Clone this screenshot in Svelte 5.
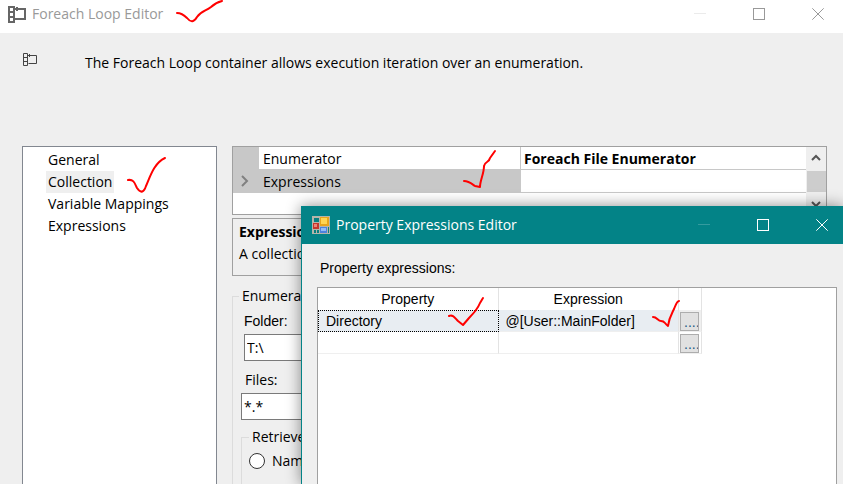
<script lang="ts">
  const pages = ["General", "Collection", "Variable Mappings", "Expressions"];

  let selectedPage = $state("Collection");
  let folder = $state("T:\\");
  let files = $state("*.*");

  const rows = [
    { property: "Directory", expression: "@[User::MainFolder]" },
    { property: "", expression: "" }
  ];

  const marks = [
    "M177 13 C181 13 184 15 187 18 C191 23 194 22 197 17 C201 11 206 11 211 7 C215 3 218 2 222 1",
    "M128 180 C134 179 135 184 137 188 C141 194 144 192 146 186 C150 177 154 163 165 158",
    "M464 181 C469 181 472 184 475 186 L480 187 C480 180 484 174 484 166 C485 161 489 163 490 158 L495 151",
    "M449 316 C453 314 455 318 458 321 L463 325 L469 318 C474 313 478 308 480 303 L483 298",
    "M653 317 C657 317 658 321 661 321 C665 321 664 323 668 326 C669 318 671 315 674 309 C676 304 677 301 679 301"
  ];
</script>

{#snippet captionButtons()}
  <div class="caption-buttons">
    <button aria-label="Minimize" disabled>
      <svg width="12" height="12"><path class="dim" d="M0 5.5H12" /></svg>
    </button>
    <button aria-label="Maximize">
      <svg width="12" height="12"><rect x="0.5" y="0.5" width="11" height="11" /></svg>
    </button>
    <button aria-label="Close">
      <svg width="12" height="12"><path d="M0.3 0.3L11.7 11.7M11.7 0.3L0.3 11.7" /></svg>
    </button>
  </div>
{/snippet}

<div class="window">
  <header class="titlebar">
    <svg class="loop-icon large" width="18" height="17">
      <path d="M1 1H6V16H1ZM1 6H6M1 11H6M6 3H17V13H7M9 1V5" />
    </svg>
    <h1>Foreach Loop Editor</h1>
    {@render captionButtons()}
  </header>

  <div class="intro">
    <svg class="loop-icon" width="14" height="13">
      <path d="M0.5 0.5H4.5V12.5H0.5ZM0.5 4.5H4.5M0.5 8.5H4.5M4.5 2.5H13.5V10.5H5.5M6.5 1V4" />
    </svg>
    <p>The Foreach Loop container allows execution iteration over an enumeration.</p>
  </div>

  <div class="content">
    <nav class="pages">
      {#each pages as page}
        <button class:selected={page === selectedPage} onclick={() => (selectedPage = page)}>{page}</button>
      {/each}
    </nav>

    <main>
      <div class="property-grid">
        <table>
          <tbody>
            <tr>
              <td class="gutter"></td>
              <th scope="row">Enumerator</th>
              <td class="value">Foreach File Enumerator</td>
            </tr>
            <tr class="active">
              <td class="gutter">
                <svg width="8" height="12"><path d="M1 1L6 6L1 11" /></svg>
              </td>
              <th scope="row">Expressions</th>
              <td class="value"></td>
            </tr>
          </tbody>
        </table>
        <div class="scrollbar">
          <svg width="10" height="7"><path d="M1 6L5 2L9 6" /></svg>
          <div class="thumb"></div>
          <svg width="10" height="7"><path d="M1 1L5 5L9 1" /></svg>
        </div>
      </div>

      <div class="help">
        <strong>Expressions</strong>
        <span>A collection</span>
      </div>

      <fieldset class="configuration">
        <legend>Enumerator</legend>
        <label class="folder-label" for="folder">Folder:</label>
        <input id="folder" class="folder" type="text" bind:value={folder} />
        <label class="files-label" for="files">Files:</label>
        <input id="files" class="files" type="text" bind:value={files} />
        <fieldset class="retrieve">
          <legend>Retrieve</legend>
          <label><input type="radio" name="retrieve" value="name" />Name</label>
        </fieldset>
      </fieldset>
    </main>
  </div>

  <section class="dialog">
    <header class="titlebar">
      <svg class="form-icon" width="18" height="18">
        <rect width="18" height="18" fill="#b5b5aa" />
        <rect x="2" y="2" width="5" height="4" fill="#087f80" />
        <rect x="8" y="1" width="9" height="9" fill="#e7a51b" />
        <rect x="9" y="2" width="6" height="6" fill="#ffd552" />
        <rect x="1" y="7" width="6" height="6" fill="#c5352b" />
        <rect x="2" y="8" width="3" height="3" fill="#ec8175" />
        <rect x="8" y="11" width="7" height="6" fill="#4c82dc" />
        <rect x="9" y="12" width="5" height="3" fill="#91bcf7" />
        <rect x="2" y="14" width="2" height="3" fill="#087f80" />
        <rect x="5" y="14" width="2" height="3" fill="#087f80" />
        <rect x="16" y="11" width="1" height="6" fill="#087f80" />
      </svg>
      <h2>Property Expressions Editor</h2>
      {@render captionButtons()}
    </header>
    <div class="dialog-body">
      <p id="grid-label">Property expressions:</p>
      <div class="data-grid">
        <table aria-labelledby="grid-label">
          <thead>
            <tr><th>Property</th><th>Expression</th><th class="browse"></th></tr>
          </thead>
          <tbody>
            {#each rows as row, i}
              <tr class:current={i === 0}>
                <td>{row.property}</td>
                <td>{row.expression}</td>
                <td class="browse"><button aria-label="Edit expression">....</button></td>
              </tr>
            {/each}
          </tbody>
        </table>
      </div>
    </div>
  </section>

  <svg class="marks" width="843" height="484">
    {#each marks as d}
      <path {d} />
    {/each}
  </svg>
</div>

<style>
  :global(body) {
    background: #efefef;
    overflow: hidden;
  }

  .window,
  .window * {
    box-sizing: border-box;
  }

  .window {
    position: relative;
    display: flex;
    flex-direction: column;
    height: 100vh;
    overflow: hidden;
    background: #efefef;
    color: #000;
    font: 14px/22px "Open Sans", "Noto Sans", sans-serif;
  }

  svg {
    display: block;
    flex-shrink: 0;
    fill: none;
  }

  h1,
  h2,
  p {
    margin: 0;
    font-size: 14px;
    font-weight: 400;
  }

  button {
    padding: 0;
    border: 0;
    background: none;
    color: inherit;
    font: inherit;
  }

  .titlebar {
    display: flex;
    flex-shrink: 0;
    align-items: center;
    height: 33px;
    padding: 0 0 5px 8px;
    background: #fff;
    color: #999;
  }

  h1 {
    margin-left: 6px;
  }

  .caption-buttons {
    display: flex;
    gap: 9px;
    margin-left: auto;
  }

  .caption-buttons button {
    display: grid;
    place-items: center;
    width: 50px;
    height: 24px;
  }

  .caption-buttons svg {
    stroke: currentColor;
  }

  .caption-buttons .dim {
    opacity: 0.2;
  }

  .loop-icon {
    stroke: #444;
  }

  .loop-icon.large {
    stroke: #666;
    stroke-width: 2;
  }

  .intro {
    display: flex;
    gap: 48px;
    height: 113px;
    padding: 19px 23px;
  }

  .intro .loop-icon {
    margin-top: 1px;
  }

  .content {
    display: grid;
    grid-template-columns: 195px 1fr;
    gap: 15px;
    flex: 1;
    min-height: 0;
    padding: 0 16px 0 22px;
  }

  .pages {
    display: flex;
    flex-direction: column;
    align-items: flex-start;
    padding: 2px 23px;
    border: 1px solid #828790;
    border-bottom: 0;
    background: #fff;
  }

  .pages button {
    height: 22px;
    padding: 0 2px;
  }

  .pages .selected {
    background: #efefef;
  }

  main {
    min-width: 0;
  }

  .property-grid {
    display: flex;
    height: 69px;
    border: 1px solid #a0a0a0;
    background: #fff;
  }

  .property-grid table {
    flex: 1;
    align-self: flex-start;
    border-collapse: separate;
    border-spacing: 0;
    table-layout: fixed;
  }

  .property-grid th,
  .property-grid td {
    height: 23px;
    padding: 1px 4px 0;
    border-bottom: 1px solid #c8c8c8;
    line-height: 21px;
    text-align: left;
  }

  .property-grid th {
    width: 261px;
    font-weight: 400;
  }

  .property-grid td.gutter {
    width: 26px;
    padding: 0 8px;
    background: #c8c8c8;
  }

  .gutter svg {
    stroke: #808080;
    stroke-width: 2;
  }

  .property-grid .value {
    padding-left: 3px;
    border-left: 1px solid #c8c8c8;
    font-weight: 700;
  }

  .active th {
    background: #c8c8c8;
  }

  .scrollbar {
    display: flex;
    flex-direction: column;
    align-items: center;
    justify-content: space-between;
    width: 20px;
    padding: 7px 0 6px;
    background: #efefef;
  }

  .scrollbar svg {
    stroke: #555;
    stroke-width: 2;
  }

  .thumb {
    width: 19px;
    height: 21px;
    background: #cdcdcd;
  }

  .help {
    display: flex;
    flex-direction: column;
    height: 58px;
    margin-top: 3px;
    padding: 2px 6px;
    border: 1px solid #a0a0a0;
  }

  fieldset {
    min-width: 0;
    margin: 0;
    border: 1px solid #dcdcdc;
  }

  legend {
    height: 22px;
    padding: 0 3px;
  }

  .configuration {
    display: flex;
    flex-direction: column;
    height: 260px;
    margin-top: 9px;
    padding: 3px 8px;
  }

  .configuration > legend {
    margin-left: -2px;
  }

  .configuration input[type="text"] {
    flex-shrink: 0;
    height: 27px;
    padding: 0 2px;
    border: 1px solid #7a7a7a;
    background: #fff;
    font: inherit;
  }

  .folder-label,
  .files-label {
    height: 24px;
    padding-left: 3px;
  }

  .folder-label {
    font-family: "Liberation Sans", sans-serif;
  }

  .files-label {
    margin-top: 8px;
    padding-left: 4px;
  }

  .folder {
    margin-left: 3px;
  }

  .retrieve {
    height: 90px;
    margin-top: 6px;
    padding: 2px 7px;
  }

  .retrieve label {
    display: flex;
    align-items: center;
    gap: 7px;
  }

  .retrieve input {
    appearance: none;
    width: 16px;
    height: 16px;
    margin: 0;
    border: 1px solid #333;
    border-radius: 50%;
    background: #fff;
  }

  .dialog {
    position: absolute;
    inset: 206px 0 0 301px;
    display: flex;
    flex-direction: column;
    border-left: 1px solid #038387;
    background: #efefef;
    box-shadow: 0 0 14px rgb(0 0 0 / 45%);
    font-family: "Liberation Sans", sans-serif;
  }

  .dialog .titlebar {
    height: 38px;
    padding: 0 0 0 10px;
    background: #038387;
    color: #fff;
    font-family: "Open Sans", "Noto Sans", sans-serif;
  }

  .dialog h2 {
    margin-left: 6px;
  }

  .dialog .caption-buttons {
    gap: 17px;
  }

  .dialog .caption-buttons button {
    width: 42px;
  }

  .dialog-body {
    display: flex;
    flex: 1;
    flex-direction: column;
    padding: 13px 6px 0 15px;
  }

  .dialog-body p {
    padding-left: 3px;
  }

  .data-grid {
    flex: 1;
    margin-top: 8px;
    border: 1px solid #a0a0a0;
    border-bottom: 0;
    background: #fff;
  }

  .data-grid table {
    width: 384px;
    border-collapse: separate;
    border-spacing: 0;
    table-layout: fixed;
  }

  .data-grid th,
  .data-grid td {
    height: 22px;
    padding: 0 7px;
    border-right: 1px solid #e3e3e3;
    line-height: 20px;
  }

  .data-grid th {
    font-weight: 400;
  }

  .data-grid td {
    border-bottom: 1px solid #efefef;
  }

  .data-grid .current td {
    background: #e8edf2;
  }

  .data-grid .current td:first-child {
    border: 1px dotted #000;
  }

  .data-grid .browse {
    width: 23px;
    padding: 1px 1px 0;
  }

  .data-grid .current .browse {
    background: #efefef;
  }

  .browse button {
    display: block;
    width: 19px;
    height: 19px;
    padding-left: 3px;
    overflow: hidden;
    border: 1px solid #adadad;
    background: #e1e1e1;
    color: #1c5a85;
    line-height: 18px;
  }

  .marks {
    position: absolute;
    inset: 0;
    pointer-events: none;
    stroke: #f00;
    stroke-linecap: round;
    stroke-linejoin: round;
    stroke-width: 2;
  }
</style>
